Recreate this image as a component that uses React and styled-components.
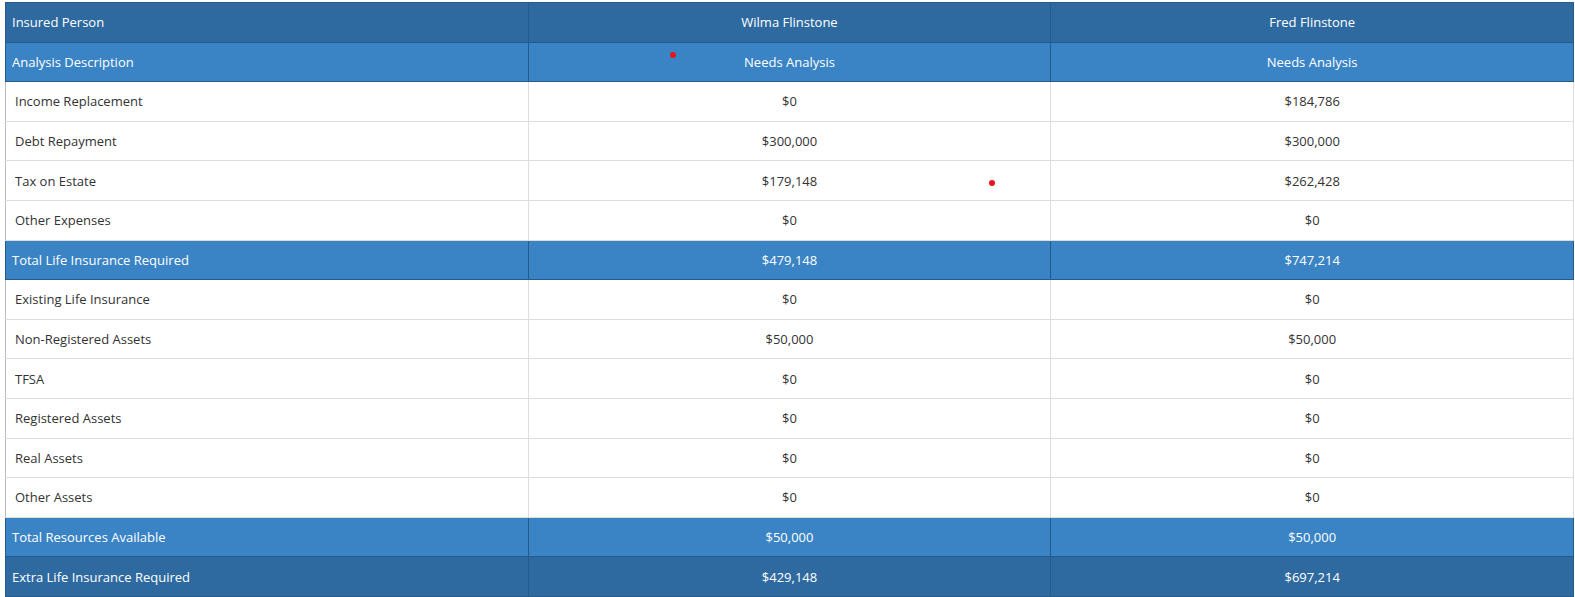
import styled, { createGlobalStyle } from "styled-components"

const GlobalStyle = createGlobalStyle`
  body {
    margin: 0;
    padding: 2px 1px 0 5px;
    font-family: "Open Sans", "Noto Sans", sans-serif;
    background: #fff;
  }
`

const rows = [
  { kind: "head", label: "Insured Person", a: "Wilma Flinstone", b: "Fred Flinstone" },
  { kind: "sub", label: "Analysis Description", a: "Needs Analysis", b: "Needs Analysis" },
  { label: "Income Replacement", a: "$0", b: "$184,786" },
  { label: "Debt Repayment", a: "$300,000", b: "$300,000" },
  { label: "Tax on Estate", a: "$179,148", b: "$262,428" },
  { label: "Other Expenses", a: "$0", b: "$0" },
  { kind: "sub", label: "Total Life Insurance Required", a: "$479,148", b: "$747,214" },
  { label: "Existing Life Insurance", a: "$0", b: "$0" },
  { label: "Non-Registered Assets", a: "$50,000", b: "$50,000" },
  { label: "TFSA", a: "$0", b: "$0" },
  { label: "Registered Assets", a: "$0", b: "$0" },
  { label: "Real Assets", a: "$0", b: "$0" },
  { label: "Other Assets", a: "$0", b: "$0" },
  { kind: "sub", label: "Total Resources Available", a: "$50,000", b: "$50,000" },
  { kind: "head", label: "Extra Life Insurance Required", a: "$429,148", b: "$697,214" },
]

export default function App() {
  return (
    <>
      <GlobalStyle />
      <Wrap>
        <Table>
          <colgroup>
            <col style={{ width: "33.33%" }} />
            <col style={{ width: "33.33%" }} />
            <col style={{ width: "33.33%" }} />
          </colgroup>
          <tbody>
            {rows.map((r) => (
              <Row key={r.label} $kind={r.kind}>
                <Label $kind={r.kind}>{r.label}</Label>
                <Value $kind={r.kind}>{r.a}</Value>
                <Value $kind={r.kind}>{r.b}</Value>
              </Row>
            ))}
          </tbody>
        </Table>
        <Dot $x={665} $y={50} />
        <Dot $x={984} $y={178} />
      </Wrap>
    </>
  )
}

const Wrap = styled.div`
  position: relative;
  width: 1569px;
`

const Table = styled.table`
  width: 100%;
  border-collapse: collapse;
  table-layout: fixed;
  font-size: 13px;
  color: #333;
`

const bg = { head: "#2e6a9f", sub: "#3a84c5" }

const Row = styled.tr`
  height: 39.6px;
  background: ${(p) => bg[p.$kind] || "#fff"};
  color: ${(p) => (p.$kind ? "#fff" : "#333")};
`

const Cell = styled.td`
  padding: 0;
  border: 1px solid ${(p) => (p.$kind ? "#235b8c" : "#ddd")};
  white-space: nowrap;
`

const Label = styled(Cell)`
  padding-left: ${(p) => (p.$kind ? "6px" : "9px")};
  text-align: left;
  border-left-color: ${(p) => (p.$kind ? "#235b8c" : "#bbb")};
`

const Value = styled(Cell)`
  text-align: center;
`

const Dot = styled.span`
  position: absolute;
  left: ${(p) => p.$x}px;
  top: ${(p) => p.$y}px;
  width: 6px;
  height: 6px;
  border-radius: 50%;
  background: #e8141b;
`
